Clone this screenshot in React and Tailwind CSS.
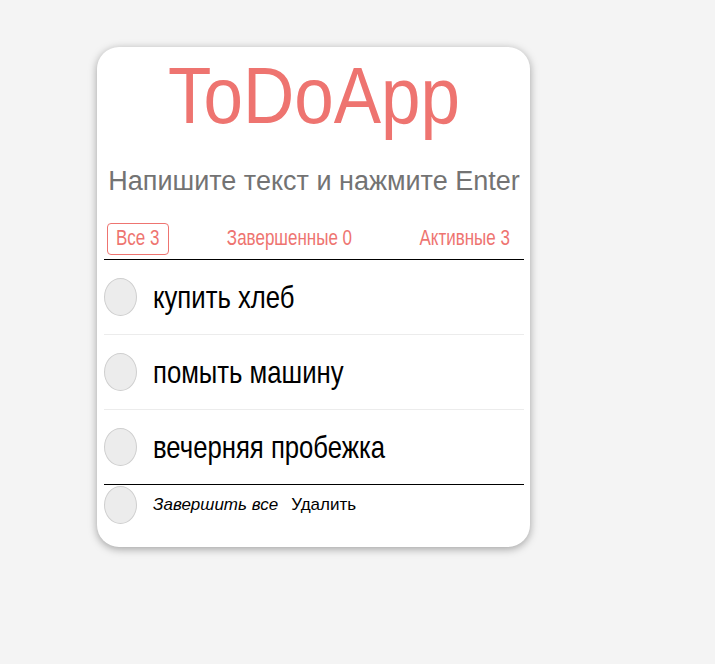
import React, { useState } from 'react';

const initialTodos = [
  { id: 1, text: 'купить хлеб', done: false },
  { id: 2, text: 'помыть машину', done: false },
  { id: 3, text: 'вечерняя пробежка', done: false },
];

const Check = ({ checked, onClick }) => (
  <button
    onClick={onClick}
    className={`w-[33px] h-[38px] shrink-0 rounded-[50%] border border-[#cfcfcf] ${
      checked ? 'bg-[#f7c2c0]' : 'bg-[#ececec]'
    }`}
  />
);

const App = () => {
  const [todos, setTodos] = useState(initialTodos);
  const [text, setText] = useState('');
  const [filter, setFilter] = useState('all');

  const done = todos.filter((t) => t.done).length;
  const active = todos.length - done;

  const shown = todos.filter((t) =>
    filter === 'all' ? true : filter === 'done' ? t.done : !t.done
  );

  const toggle = (id) =>
    setTodos((prev) => prev.map((t) => (t.id === id ? { ...t, done: !t.done } : t)));

  const addTodo = (e) => {
    if (e.key === 'Enter' && text.trim()) {
      setTodos([...todos, { id: Date.now(), text: text.trim(), done: false }]);
      setText('');
    }
  };

  const tabs = [
    { key: 'all', label: 'Все', count: todos.length },
    { key: 'done', label: 'Завершенные', count: done },
    { key: 'active', label: 'Активные', count: active },
  ];

  return (
    <div className="min-h-screen bg-[#f4f4f4] pt-[47px] pl-[97px] font-['Liberation_Sans',Arial,sans-serif]">
      <div className="w-[433px] bg-white rounded-[22px] shadow-[0_2px_9px_rgba(0,0,0,0.35)] pl-[7px] pr-[6px] pt-[13px] pb-[23px]">
        {/* заголовок */}
        <h1 className="text-center text-[71px] leading-none text-[#ee7470]">
          <span className="inline-block scale-y-[1.12]">ToDoApp</span>
        </h1>

        <input
          className="mt-[34px] w-full h-[32px] p-0 text-center text-[27px] leading-[32px] outline-none text-[#333] placeholder:text-[#737373]"
          placeholder="Напишите текст и нажмите Enter"
          value={text}
          onChange={(e) => setText(e.target.value)}
          onKeyDown={addTodo}
        />

        {/* фильтры */}
        <div className="mt-[26px] flex items-center justify-between pl-[3px] pr-[5px] pb-[4px] border-b border-black text-[17px] text-[#ee7470]">
          {tabs.map((t) => (
            <button
              key={t.key}
              onClick={() => setFilter(t.key)}
              className={`h-[32px] px-2 leading-[30px] rounded-[4px] border ${
                filter === t.key ? 'border-[#ee7470]' : 'border-transparent'
              }`}
            >
              <span className="inline-block scale-y-[1.27]">
                {t.label} {t.count}
              </span>
            </button>
          ))}
        </div>

        {/* список */}
        <ul>
          {shown.map((t, i) => (
            <li
              key={t.id}
              className={`h-[75px] flex items-center gap-4 border-b ${
                i === shown.length - 1 ? 'border-black' : 'border-[#ececec]'
              }`}
            >
              <Check checked={t.done} onClick={() => toggle(t.id)} />
              <span
                className={`inline-block scale-y-[1.25] text-[25.7px] leading-[36px] ${
                  t.done ? 'line-through text-[#aaa]' : 'text-black'
                }`}
              >
                {t.text}
              </span>
            </li>
          ))}
        </ul>

        {/* низ */}
        <div className="flex items-center gap-4 pt-[1px] text-[17px] text-black">
          <Check
            checked={false}
            onClick={() => setTodos(todos.map((t) => ({ ...t, done: true })))}
          />
          <div className="flex items-center gap-[13px]">
            <button className="italic">Завершить все</button>
            <button onClick={() => setTodos(todos.filter((t) => !t.done))}>Удалить</button>
          </div>
        </div>
      </div>
    </div>
  );
};

export default App;
